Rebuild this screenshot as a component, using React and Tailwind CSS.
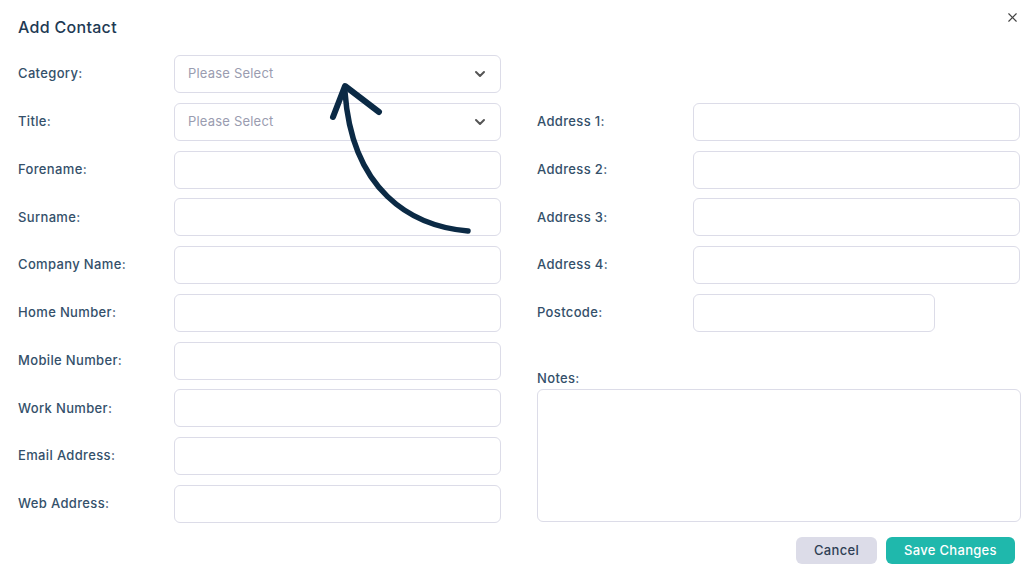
import { X, ChevronDown } from 'lucide-react';

const leftFields = [
  { label: 'Category:', select: true },
  { label: 'Title:', select: true },
  { label: 'Forename:' },
  { label: 'Surname:' },
  { label: 'Company Name:' },
  { label: 'Home Number:' },
  { label: 'Mobile Number:' },
  { label: 'Work Number:' },
  { label: 'Email Address:' },
  { label: 'Web Address:' },
];

const rightFields = ['Address 1:', 'Address 2:', 'Address 3:', 'Address 4:'];

function Field({ label, select, short }) {
  return (
    <div className="flex items-center h-[38px]">
      <label className="w-[156px] shrink-0 text-[13px] font-medium tracking-[0.35px] text-[#34506a]">{label}</label>
      {select ? (
        <div className="flex items-center justify-between w-[327px] h-[38px] rounded-md border border-[#dcdce8] pl-[13px] pr-[12px] bg-white">
          <span className="text-[13px] tracking-[0.2px] text-[#9a9cb0]">Please Select</span>
          <ChevronDown size={16} strokeWidth={3} className="text-[#555]" />
        </div>
      ) : (
        <input className={`${short ? 'w-[242px]' : 'w-[327px]'} h-[38px] rounded-md border border-[#dcdce8] bg-white outline-none`} />
      )}
    </div>
  );
}

export default function App() {
  return (
    <div className="relative w-[1031px] h-[581px] bg-white font-['Inter',sans-serif] overflow-hidden">
      <button className="absolute right-[11px] top-[10px] text-[#444]">
        <X size={15} strokeWidth={1.8} />
      </button>

      <div className="pl-[18px] pt-[16px]">
        <h2 className="text-[16px] font-medium tracking-[0.3px] text-[#1e3a54] leading-[22px]">Add Contact</h2>

        <div className="flex gap-[36px] mt-[17px]">
          {/* left column */}
          <div className="flex flex-col gap-[9.75px]">
            {leftFields.map(f => (
              <Field key={f.label} {...f} />
            ))}
          </div>

          {/* right column */}
          <div className="flex flex-col gap-[9.75px]">
            <div className="h-[38px]" />
            {rightFields.map(l => (
              <Field key={l} label={l} />
            ))}
            <Field label="Postcode:" short />
            <div className="flex flex-col mt-[28px]">
              <label className="text-[13px] font-medium tracking-[0.35px] text-[#34506a] leading-[16px] mb-[3px]">Notes:</label>
              <textarea className="w-[484px] h-[133px] rounded-md border border-[#dcdce8] resize-none outline-none" />
            </div>
          </div>
        </div>

        <div className="flex justify-end gap-[9px] pr-[16px] mt-[14px]">
          <button className="h-[27px] w-[81px] rounded-md bg-[#dcdce8] text-[13px] font-medium tracking-[0.3px] text-[#2f3f55]">Cancel</button>
          <button className="h-[27px] w-[129px] rounded-md bg-[#1fb8ac] text-[13px] font-medium tracking-[0.3px] text-white">Save Changes</button>
        </div>
      </div>

      {/* annotation arrow */}
      <svg className="absolute left-0 top-0 pointer-events-none" width="1031" height="581">
        <path d="M468 231 C 410 226, 352 190, 345 92" fill="none" stroke="#0b2a45" strokeWidth="5.5" strokeLinecap="round" />
        <path d="M333 117 L345 86 L379 112" fill="none" stroke="#0b2a45" strokeWidth="6" strokeLinecap="round" strokeLinejoin="round" />
      </svg>
    </div>
  );
}
